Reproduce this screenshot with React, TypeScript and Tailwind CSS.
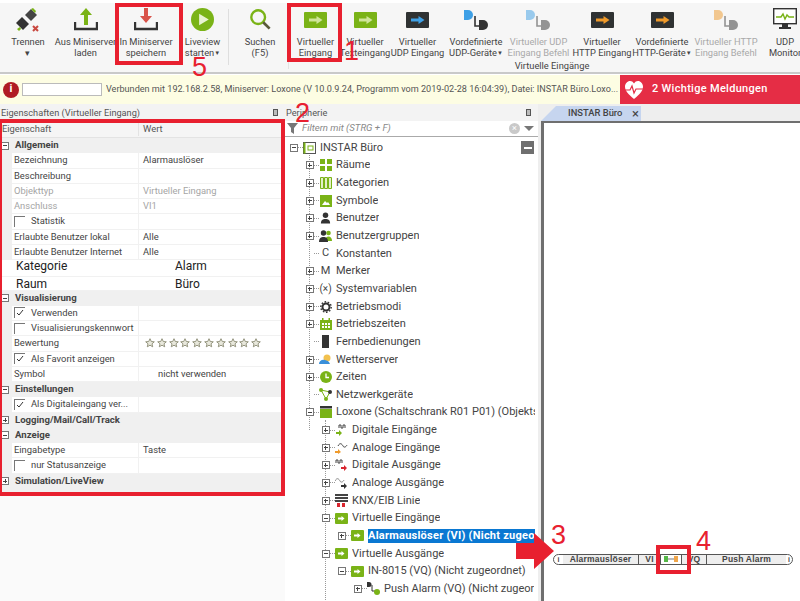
import React from "react";

const green = "#7ab317";

function ArrowBox({ color = "#7ab317", arrow = "#cfe59c" }: { color?: string; arrow?: string }) {
  return (
    <svg className="mt-[4px]" width="23" height="16" viewBox="0 0 23 16">
      <rect x="0" y="0" width="23" height="16" rx="1" fill={color} />
      <path d="M5 6.500h7.500V4l6 4-6 4V9.500H5z" fill={arrow} />
    </svg>
  );
}

function LogicIcon({ color, opacity = 1 }: { color: string; opacity?: number }) {
  return (
    <svg className="mt-[2px]" width="25" height="21" viewBox="0 0 25 21" opacity={opacity}>
      <path d="M0 0h4a4.500 4.500 0 0 1 0 10H0z" fill={color} />
      <path d="M11 6v10h5" fill="none" stroke="#333" strokeWidth="1.600" />
      <path d="M15 10h4a5 5 0 0 1 0 10h-4z" fill="#333" />
    </svg>
  );
}

function TrayIcon({ color, down }: { color: string; down?: boolean }) {
  return (
    <svg width="24" height="24" viewBox="0 0 24 24">
      <path d="M1 14v7h22v-7" fill="none" stroke="#333" strokeWidth="2.400" />
      {down ? (
        <path d="M10 0h4v8h4l-6 7-6-7h4z" fill={color} />
      ) : (
        <path d="M12 0l6 7h-4v10h-4V7H6z" fill={color} />
      )}
    </svg>
  );
}

function ToolButton({
  lines,
  width,
  icon,
  disabled,
  caret,
}: {
  lines: string[];
  width: string;
  icon: React.ReactNode;
  disabled?: boolean;
  caret?: boolean;
}) {
  return (
    <div className={`${width} shrink-0 flex flex-col items-center`}>
      <div className="h-[34px] pt-[5px] flex items-start justify-center">{icon}</div>
      <div className={`text-[9.300px] leading-[10.500px] text-center whitespace-nowrap ${disabled ? "text-[#a9a9a9]" : "text-[#444]"}`}>
        {lines.map((line, i) => (
          <div key={i}>
            {line}
            {caret && i === lines.length - 1 ? <span className="text-[6px] align-[1px]">▼</span> : null}
          </div>
        ))}
      </div>
    </div>
  );
}

function Toolbar() {
  return (
    <div className="h-[75px] pt-[3px] bg-white shrink-0">
      <div className="h-[71px] bg-[#f6f6f6] border-b-2 border-[#c9c9c9] flex">
        <ToolButton
          width="w-[56px]"
          lines={["Trennen", "▾"]}
          icon={
            <svg width="24" height="24" viewBox="0 0 24 24">
              <path d="M0 15l6-6 7 7-6 6z" fill="#333" />
              <path d="M9 7l6-6 6 6-6 6z" fill="#444" />
              <path d="M15 1l2-1 3 3-1 2zM1 21l3-2 1 2-2 2z" fill="#7ab317" />
              <path d="M17 18l5 5M22 18l-5 5" stroke="#c9483f" strokeWidth="2" />
            </svg>
          }
        />
        <ToolButton width="w-[59px]" lines={["Aus Miniserver", "laden"]} icon={<TrayIcon color={green} />} />
        <ToolButton width="w-[62px]" lines={["In Miniserver", "speichern"]} icon={<TrayIcon color="#d9534a" down />} />
        <ToolButton
          width="w-[51px]"
          lines={["Liveview", "starten"]}
          caret
          icon={
            <svg width="23" height="23" viewBox="0 0 24 24">
              <circle cx="12" cy="12" r="12" fill={green} />
              <path d="M8.500 6l10 6-10 6z" fill="#e9f3d2" />
            </svg>
          }
        />
        <div className="w-px h-[56px] mt-[6px] bg-[#dedede] shrink-0" />
        <ToolButton
          width="w-[59px] pl-[3px]"
          lines={["Suchen", "(F5)"]}
          icon={
            <svg width="22" height="22" viewBox="0 0 24 24">
              <circle cx="10" cy="10" r="7.500" fill="none" stroke="#7ab317" strokeWidth="2.600" />
              <path d="M15.500 15.500l7 7" stroke="#5a5a3a" strokeWidth="3" />
            </svg>
          }
        />
        <div className="w-px h-[66px] bg-[#e3e3e3] shrink-0" />
        <div className="w-[526px] shrink-0 flex flex-col">
          <div className="flex h-[57px]">
            <ToolButton width="w-[53px]" lines={["Virtueller", "Eingang"]} icon={<ArrowBox />} />
            <ToolButton width="w-[46px]" lines={["Virtueller", "Texteingang"]} icon={<ArrowBox />} />
            <ToolButton width="w-[59px]" lines={["Virtueller", "UDP Eingang"]} icon={<ArrowBox color="#2f3233" arrow="#3ea0e6" />} />
            <ToolButton width="w-[58px]" lines={["Vordefinierte", "UDP-Geräte"]} caret icon={<LogicIcon color="#3ea0e6" />} />
            <ToolButton width="w-[67px]" lines={["Virtueller UDP", "Eingang Befehl"]} disabled icon={<LogicIcon color="#3ea0e6" opacity={0.5} />} />
            <ToolButton width="w-[60px]" lines={["Virtueller", "HTTP Eingang"]} icon={<ArrowBox color="#2f3233" arrow="#ef9a2b" />} />
            <ToolButton width="w-[60px]" lines={["Vordefinierte", "HTTP-Geräte"]} caret icon={<ArrowBox color="#2f3233" arrow="#ef9a2b" />} />
            <ToolButton width="w-[68px]" lines={["Virtueller HTTP", "Eingang Befehl"]} disabled icon={<LogicIcon color="#ef9a2b" opacity={0.5} />} />
            <ToolButton
              width="w-[50px]"
              lines={["UDP", "Monitor"]}
              icon={
                <svg width="24" height="22" viewBox="0 0 24 22">
                  <rect x="0.700" y="0.700" width="22.600" height="15" fill="#fff" stroke="#333" strokeWidth="1.400" />
                  <path d="M3 9h5l2-3 2 5 2-4 2 2h5" fill="none" stroke="#7ab317" strokeWidth="1.400" />
                  <path d="M9 16h6v3h3v2H6v-2h3z" fill="#333" />
                </svg>
              }
            />
          </div>
          <div className="text-[9.300px] leading-[12px] text-center text-[#444]">Virtuelle Eingänge</div>
        </div>
      </div>
    </div>
  );
}

function InfoBar() {
  return (
    <div className="h-[29px] flex bg-[#fdfde3] shrink-0">
      <div className="flex-1 flex items-center pl-[3px] min-w-0">
        <div className="w-[16px] h-[16px] rounded-full bg-[#b01c24] text-white text-[11px] font-bold flex items-center justify-center shrink-0">
          i
        </div>
        <div className="w-[80px] h-[13px] ml-[3px] mr-[4px] bg-white border border-[#bbb] shrink-0" />
        <div className="text-[9.100px] text-[#555] whitespace-nowrap overflow-hidden">
          Verbunden mit 192.168.2.58, Miniserver: Loxone (V 10.0.9.24, Programm vom 2019-02-28 16:04:39), Datei: INSTAR Büro.Loxo...
        </div>
      </div>
      <div className="w-[180px] shrink-0 bg-[#e52d45] flex items-center text-white">
        <svg className="ml-[3px]" width="22" height="20" viewBox="0 0 20 20">
          <path d="M10 19C4 14 1 11 1 6.500 1 3.500 3.500 1 6 1c1.700 0 3 .8 4 2.500C11 1.800 12.300 1 14 1c2.500 0 5 2.500 5 5.500C19 11 16 14 10 19z" fill="#fff" />
          <path d="M1 10h5l2-4 2 7 2-4h7" fill="none" stroke="#e52d45" strokeWidth="1.200" />
        </svg>
        <span className="ml-[7px] text-[11px] font-medium tracking-[0.3px] whitespace-nowrap">2 Wichtige Meldungen</span>
      </div>
    </div>
  );
}

function PanelTitle({ title }: { title: string }) {
  return (
    <div className="h-[17px] flex items-center justify-between pl-[1px] pr-[7px] text-[9.200px] text-[#555] bg-[#f3f3f3]">
      <span>{title}</span>
      <span className="w-[5px] h-[7px] border border-[#555] bg-[#bbb]" />
    </div>
  );
}

function Check({ checked }: { checked?: boolean }) {
  return (
    <span className="w-[11px] h-[11px] border-l border-t border-[#777] bg-white flex items-center justify-center shrink-0">
      {checked ? (
        <svg width="8" height="8" viewBox="0 0 8 8">
          <path d="M1 4l2 2 4-5" fill="none" stroke="#333" strokeWidth="1" />
        </svg>
      ) : null}
    </span>
  );
}

function Box({ open }: { open: boolean }) {
  return (
    <span className="w-[8px] h-[8px] border border-[#777] bg-white relative shrink-0 block">
      <span className="absolute left-[1px] right-[1px] top-[2.500px] h-px bg-[#444]" />
      {open ? null : <span className="absolute top-[1px] bottom-[1px] left-[2.500px] w-px bg-[#444]" />}
    </span>
  );
}

function Category({ title, open = true }: { title: string; open?: boolean }) {
  return (
    <div className="h-[15.250px] bg-[#f0f0f0] flex items-center pl-[1px]">
      <Box open={open} />
      <span className="ml-[6px] text-[9.600px] font-bold text-[#444] whitespace-nowrap">{title}</span>
    </div>
  );
}

function PropRow({
  label,
  value,
  muted,
  check,
  checked,
  valueIndent,
  children,
}: {
  label: string;
  value?: string;
  muted?: boolean;
  check?: boolean;
  checked?: boolean;
  valueIndent?: boolean;
  children?: React.ReactNode;
}) {
  return (
    <div className={`h-[15.250px] flex text-[9.400px] border-b border-[#f1f1f1] bg-white ml-[12px] ${muted ? "text-[#a5a5a5]" : "text-[#444]"}`}>
      <div className="w-[127px] flex items-center pl-[2px] border-r border-[#f1f1f1] shrink-0 whitespace-nowrap">
        {check ? <span className="mr-[6px]"><Check checked={checked} /></span> : null}
        {label}
      </div>
      <div className={`flex items-center ${valueIndent ? "pl-[19px]" : "pl-[4px]"}`}>{children ?? value}</div>
    </div>
  );
}

function PastedRow({ label, value, h }: { label: string; value: string; h: string }) {
  return (
    <div className={`${h} bg-white flex items-start text-[12px] leading-[12px] text-[#222] border-b border-[#f1f1f1]`}>
      <span className="w-[175px] pl-[16px]">{label}</span>
      <span>{value}</span>
    </div>
  );
}

function Stars() {
  return (
    <span className="flex gap-[1.800px] pl-[2px]">
      {Array.from({ length: 10 }).map((_, i) => (
        <svg key={i} width="10" height="10" viewBox="0 0 10 10">
          <path d="M5 .7l1.300 2.800 3 .3-2.300 2 .7 3L5 7.200 2.300 8.800l.7-3-2.300-2 3-.3z" fill="#e8e8dc" stroke="#8b8b74" strokeWidth=".9" />
        </svg>
      ))}
    </span>
  );
}

function Properties() {
  return (
    <div className="w-[285px] shrink-0 flex flex-col bg-[#fafafa]">
      <PanelTitle title="Eigenschaften (Virtueller Eingang)" />
      <div className="h-[17px] bg-[#f5f5f5] flex items-center text-[9.400px] text-[#555] border-b border-[#e3e3e3]">
        <span className="w-[139px] pl-[2px] border-r border-[#e3e3e3]">Eigenschaft</span>
        <span className="pl-[4px]">Wert</span>
      </div>
      <div className="pr-[4px] bg-[#f0f0f0] h-[358px]">
        <Category title="Allgemein" />
        <PropRow label="Bezeichnung" value="Alarmauslöser" />
        <PropRow label="Beschreibung" />
        <PropRow label="Objekttyp" value="Virtueller Eingang" muted />
        <PropRow label="Anschluss" value="VI1" muted />
        <PropRow label="Statistik" check />
        <PropRow label="Erlaubte Benutzer lokal" value="Alle" />
        <PropRow label="Erlaubte Benutzer Internet" value="Alle" />
        <PastedRow label="Kategorie" value="Alarm" h="h-[16.500px]" />
        <PastedRow label="Raum" value="Büro" h="h-[14px] pt-[1px]" />
        <Category title="Visualisierung" />
        <PropRow label="Verwenden" check checked />
        <PropRow label="Visualisierungskennwort" check />
        <PropRow label="Bewertung">
          <Stars />
        </PropRow>
        <PropRow label="Als Favorit anzeigen" check checked />
        <PropRow label="Symbol" value="nicht verwenden" valueIndent />
        <Category title="Einstellungen" />
        <PropRow label="Als Digitaleingang ver..." check checked />
        <Category title="Logging/Mail/Call/Track" open={false} />
        <Category title="Anzeige" />
        <PropRow label="Eingabetype" value="Taste" />
        <PropRow label="nur Statusanzeige" check />
        <Category title="Simulation/LiveView" open={false} />
      </div>
    </div>
  );
}

const sq = (c: string) => (
  <svg width="13" height="11" viewBox="0 0 13 11">
    <rect width="13" height="11" rx="1" fill={c} />
    <path d="M3 4.500h3.500V3l3 2.500-3 2.500V6.500H3z" fill="#fff" />
  </svg>
);

const treeIcons: Record<string, React.ReactNode> = {
  raeume: (
    <svg width="12" height="12" viewBox="0 0 12 12">
      <path d="M0 0h5v5H0zM7 0h5v5H7zM0 7h5v5H0zM7 7h5v5H7z" fill={green} />
    </svg>
  ),
  kategorien: (
    <svg width="12" height="12" viewBox="0 0 12 12">
      <path d="M.5.5h3v11h-3zM4.500.5h3v11h-3zM8.500.5h3v11h-3z" fill="#e3f0c8" stroke={green} />
    </svg>
  ),
  symbole: (
    <svg width="12" height="12" viewBox="0 0 12 12">
      <rect width="12" height="12" fill={green} />
      <path d="M2 10l3-4 2 2 1-1 2 3z" fill="#fff" />
    </svg>
  ),
  user: (
    <svg width="11" height="12" viewBox="0 0 12 12">
      <circle cx="6" cy="3" r="3" fill="#333" />
      <path d="M1 12c0-4 2-5 5-5s5 1 5 5z" fill="#333" />
    </svg>
  ),
  group: (
    <svg width="13" height="12" viewBox="0 0 13 12">
      <circle cx="9.500" cy="3" r="2.300" fill={green} />
      <path d="M6 11c0-3 1.500-4.500 3.500-4.500S13 8 13 11z" fill={green} />
      <circle cx="4.500" cy="3" r="2.700" fill="#333" />
      <path d="M0 12c0-4 2-5 4.500-5S9 8 9 12z" fill="#333" />
    </svg>
  ),
  c: <span className="text-[11px] text-[#444]">C</span>,
  m: <span className="text-[11px] text-[#444]">M</span>,
  x: <span className="text-[10px] text-[#444] whitespace-nowrap">(×)</span>,
  gear: (
    <svg width="12" height="12" viewBox="0 0 12 12">
      <circle cx="6" cy="6" r="3.500" fill="none" stroke="#333" strokeWidth="2" />
      <circle cx="6" cy="6" r="5.200" fill="none" stroke="#333" strokeWidth="1.400" strokeDasharray="1.600 1.600" />
    </svg>
  ),
  cal: (
    <svg width="12" height="12" viewBox="0 0 12 12">
      <rect y="2" width="12" height="10" fill={green} />
      <path d="M2 0h1.500v3H2zM8.500 0H10v3H8.500z" fill={green} />
      <path d="M2 5h2v2H2zM5 5h2v2H5zM8 5h2v2H8zM2 8h2v2H2zM5 8h2v2H5zM8 8h2v2H8z" fill="#fff" />
    </svg>
  ),
  remote: <span className="w-[7px] h-[13px] bg-[#333] block" />,
  weather: (
    <svg width="13" height="12" viewBox="0 0 13 12">
      <circle cx="8" cy="4" r="3.500" fill="#f2c14e" />
      <path d="M0 10c0-3 3-5 6-4 2 .5 4 1 5 4z" fill="#3a8fd9" />
    </svg>
  ),
  clock: (
    <svg width="12" height="12" viewBox="0 0 12 12">
      <circle cx="6" cy="6" r="6" fill={green} />
      <path d="M6 2.500V6.500h3" fill="none" stroke="#fff" strokeWidth="1.300" />
    </svg>
  ),
  net: (
    <svg width="13" height="13" viewBox="0 0 13 13">
      <path d="M2 2l5 9 4-7z" fill="none" stroke={green} />
      <circle cx="2" cy="2" r="2" fill={green} />
      <circle cx="7" cy="11" r="2" fill={green} />
      <circle cx="11" cy="4" r="2" fill="#333" />
    </svg>
  ),
  server: (
    <svg width="12" height="12" viewBox="0 0 12 12">
      <rect width="12" height="2.500" fill="#333" />
      <rect y="3" width="12" height="9" fill={green} />
    </svg>
  ),
  di: (
    <svg width="13" height="12" viewBox="0 0 13 12">
      <path d="M4 4V1h2v3h2V1h2v3" fill="none" stroke="#444" />
      <path d="M1 8h3V6l3 3-3 3v-2H1z" fill={green} />
    </svg>
  ),
  ai: (
    <svg width="13" height="12" viewBox="0 0 13 12">
      <path d="M3 4c2-4 4-2 5 0s3 1 4-1" fill="none" stroke="#444" />
      <path d="M0 9h3V7l3 3-3 2v-1H0z" fill="#ef9a2b" />
    </svg>
  ),
  do: (
    <svg width="13" height="12" viewBox="0 0 13 12">
      <path d="M1 4V1h2v3h2V1h2v3" fill="none" stroke="#444" />
      <path d="M6 8h3V6l3 3-3 3v-2H6z" fill="#d9252f" />
    </svg>
  ),
  ao: (
    <svg width="13" height="12" viewBox="0 0 13 12">
      <path d="M0 4c2-4 4-2 5 0s3 1 4-1" fill="none" stroke="#888" />
      <path d="M6 8h3V6l3 3-3 3v-2H6z" fill="#333" />
    </svg>
  ),
  knx: (
    <svg width="13" height="13" viewBox="0 0 13 13">
      <path d="M0 0h13v2H0zM0 3h13v2H0zM0 6h13v2H0z" fill="#444" />
      <path d="M2 9h3v4H2zM7 9h3v4H7z" fill="#d9252f" />
    </svg>
  ),
  vi: sq("#7ab317"),
  push: (
    <svg width="13" height="13" viewBox="0 0 13 13">
      <path d="M0 0h2a2.500 2.500 0 0 1 0 5H0z" fill="#333" />
      <path d="M5 3v6h3" fill="none" stroke="#333" />
      <circle cx="10" cy="10" r="3" fill={green} />
    </svg>
  ),
  root: (
    <svg width="13" height="12" viewBox="0 0 13 12">
      <rect x=".5" y=".5" width="12" height="11" fill="#fff" stroke="#555" />
      <rect x=".5" y=".5" width="2" height="11" fill={green} />
      <rect x="5" y="4" width="5" height="4" fill="none" stroke={green} />
    </svg>
  ),
};

type TreeItem = { label: string; icon: string; depth: number; box?: "plus" | "minus"; selected?: boolean };

const tree: TreeItem[] = [
  { label: "INSTAR Büro", icon: "root", depth: -1, box: "minus" },
  { label: "Räume", icon: "raeume", depth: 0, box: "plus" },
  { label: "Kategorien", icon: "kategorien", depth: 0, box: "plus" },
  { label: "Symbole", icon: "symbole", depth: 0, box: "plus" },
  { label: "Benutzer", icon: "user", depth: 0, box: "plus" },
  { label: "Benutzergruppen", icon: "group", depth: 0, box: "plus" },
  { label: "Konstanten", icon: "c", depth: 0 },
  { label: "Merker", icon: "m", depth: 0, box: "plus" },
  { label: "Systemvariablen", icon: "x", depth: 0, box: "plus" },
  { label: "Betriebsmodi", icon: "gear", depth: 0, box: "plus" },
  { label: "Betriebszeiten", icon: "cal", depth: 0, box: "plus" },
  { label: "Fernbedienungen", icon: "remote", depth: 0 },
  { label: "Wetterserver", icon: "weather", depth: 0, box: "plus" },
  { label: "Zeiten", icon: "clock", depth: 0, box: "plus" },
  { label: "Netzwerkgeräte", icon: "net", depth: 0 },
  { label: "Loxone (Schaltschrank R01 P01) (Objekts", icon: "server", depth: 0, box: "minus" },
  { label: "Digitale Eingänge", icon: "di", depth: 1, box: "plus" },
  { label: "Analoge Eingänge", icon: "ai", depth: 1, box: "plus" },
  { label: "Digitale Ausgänge", icon: "do", depth: 1, box: "plus" },
  { label: "Analoge Ausgänge", icon: "ao", depth: 1, box: "plus" },
  { label: "KNX/EIB Linie", icon: "knx", depth: 1, box: "plus" },
  { label: "Virtuelle Eingänge", icon: "vi", depth: 1, box: "minus" },
  { label: "Alarmauslöser (VI) (Nicht zugeo", icon: "vi", depth: 2, box: "plus", selected: true },
  { label: "Virtuelle Ausgänge", icon: "vi", depth: 1, box: "minus" },
  { label: "IN-8015 (VQ) (Nicht zugeordnet)", icon: "vi", depth: 2, box: "minus" },
  { label: "Push Alarm (VQ) (Nicht zugeor", icon: "push", depth: 3, box: "plus" },
  { label: "", icon: "vi", depth: 1, box: "plus" },
];

const depthPad: Record<string, string> = {
  "-1": "pl-[4px]",
  "0": "pl-[20px]",
  "1": "pl-[36px]",
  "2": "pl-[52px]",
  "3": "pl-[68px]",
};

function TreeRow({ item }: { item: TreeItem }) {
  return (
    <div className={`relative h-[17.650px] flex items-center ${depthPad[String(item.depth)]}`}>
      <span className="w-[9px] shrink-0 flex justify-center">{item.box ? <Box open={item.box === "minus"} /> : null}</span>
      <span className="w-[5px] h-0 border-t border-dotted border-[#999] shrink-0" />
      <span className="w-[13px] mr-[4px] shrink-0 flex items-center justify-center">{treeIcons[item.icon]}</span>
      <span
        className={`text-[11px] whitespace-nowrap leading-[14px] min-w-0 overflow-hidden ${
          item.selected ? "bg-[#0a78d2] text-white font-bold flex-1 tracking-[0.25px]" : "text-[#444]"
        }`}
      >
        {item.label}
      </span>
    </div>
  );
}

function Periphery() {
  return (
    <div className="w-[253px] shrink-0 flex flex-col bg-white">
      <PanelTitle title="Peripherie" />
      <div className="h-[16px] flex items-center border-b border-[#aaa] pl-[2px] pr-[4px] text-[9.600px] italic text-[#888]">
        <svg width="11" height="11" viewBox="0 0 11 11">
          <path d="M0 0h11L7 5v6L4 9V5z" fill="#777" />
        </svg>
        <span className="ml-[4px] flex-1">Filtern mit (STRG + F)</span>
        <span className="w-[11px] h-[11px] rounded-full bg-[#c9c9c9] text-white text-[9px] not-italic flex items-center justify-center mr-[4px]">×</span>
        <span className="w-0 h-0 border-x-[5px] border-x-transparent border-t-[5px] border-t-[#777]" />
      </div>
      <div className="relative flex-1 overflow-hidden">
        <div className="absolute left-[24px] top-[18px] h-[275px] border-l border-dotted border-[#999]" />
        <div className="absolute left-[40px] top-[283px] h-[180px] border-l border-dotted border-[#999]" />
        <div className="relative w-[250px] pt-[2px]">
          {tree.map((item, i) => (
            <TreeRow key={i} item={item} />
          ))}
        </div>
        <div className="absolute right-[4px] top-[4px] w-[13px] h-[13px] bg-[#6f6f6f] flex items-center justify-center">
          <span className="w-[8px] h-[2px] bg-white" />
        </div>
      </div>
    </div>
  );
}

function LogicBlock() {
  return (
    <div className="absolute left-[9px] top-[431px] w-[240px] h-[11px] rounded-full border border-[#555] bg-white flex text-[8.500px] font-bold tracking-[0.2px] leading-[9px] text-[#444] font-['Liberation_Sans',sans-serif] overflow-hidden">
      <span className="w-[9px] flex items-center justify-center text-[7px]">i</span>
      <span className="w-[76px] bg-[#eeeeee] border-r border-[#555] text-center">Alarmauslöser</span>
      <span className="w-[22px] bg-[#eeeeee] border-r border-[#555] text-center">VI</span>
      <span className="w-[20px] flex items-center justify-center">
        <svg width="20" height="9" viewBox="0 0 20 9">
          <rect x="3" y="1" width="4" height="6" fill="#55b848" />
          <path d="M7 4h8" stroke="#777" />
          <rect x="13" y="1" width="4" height="6" fill="#f0a64a" />
        </svg>
      </span>
      <span className="w-[26px] bg-[#eeeeee] border-x border-[#555] text-center">VQ</span>
      <span className="w-[79px] bg-[#eeeeee] text-center">Push Alarm</span>
      <span className="flex-1 flex items-center justify-center text-[7px]">i</span>
    </div>
  );
}

function Canvas() {
  return (
    <div className="flex-1 min-w-0 flex flex-col bg-[#eeeeee] pl-[3px]">
      <div className="h-[17px] flex items-end">
        <div className="w-[100px] h-[15px] shrink-0 bg-[#c6d5ef] [clip-path:polygon(15px_0,100%_0,100%_100%,0_100%)] flex items-center justify-between pl-[27px] pr-[2px] text-[9.400px] font-medium text-[#444] whitespace-nowrap">
          <span>INSTAR Büro</span>
          <span className="text-[13px] font-normal leading-none">×</span>
        </div>
      </div>
      <div className="relative flex-1 border-l-[3px] border-t-[2px] border-[#6f6f6f] bg-white overflow-hidden">
        <LogicBlock />
      </div>
    </div>
  );
}

function Annotations() {
  const box = "absolute border-[4px] border-[#e8202f]";
  const num = "absolute text-[#e8202f] text-[27px] leading-none font-['Liberation_Sans',sans-serif]";
  return (
    <>
      <div className={`${box} left-[115px] top-[3px] w-[68px] h-[62px]`} />
      <div className={`${box} left-[287px] top-[3px] w-[55px] h-[59px]`} />
      <div className={`${box} left-[-2px] top-[119px] w-[287px] h-[377px]`} />
      <div className={`${box} left-[656px] top-[545px] w-[35px] h-[29px]`} />
      <span className={`${num} left-[192px] top-[54px]`}>5</span>
      <span className={`${num} left-[344px] top-[38px]`}>1</span>
      <span className={`${num} left-[295px] top-[100px]`}>2</span>
      <span className={`${num} left-[551px] top-[522px]`}>3</span>
      <span className={`${num} left-[696px] top-[528px]`}>4</span>
      <svg className="absolute left-[516px] top-[533px]" width="38" height="36" viewBox="0 0 38 36">
        <path d="M0 10h18V0l20 18-20 18V26H0z" fill="#e8202f" />
      </svg>
    </>
  );
}

export default function App() {
  return (
    <div className="relative w-[800px] h-[601px] overflow-hidden flex flex-col bg-white font-['Roboto','Noto_Sans',sans-serif]">
      <Toolbar />
      <InfoBar />
      <div className="flex-1 flex min-h-0">
        <Properties />
        <Periphery />
        <Canvas />
      </div>
      <Annotations />
    </div>
  );
}
